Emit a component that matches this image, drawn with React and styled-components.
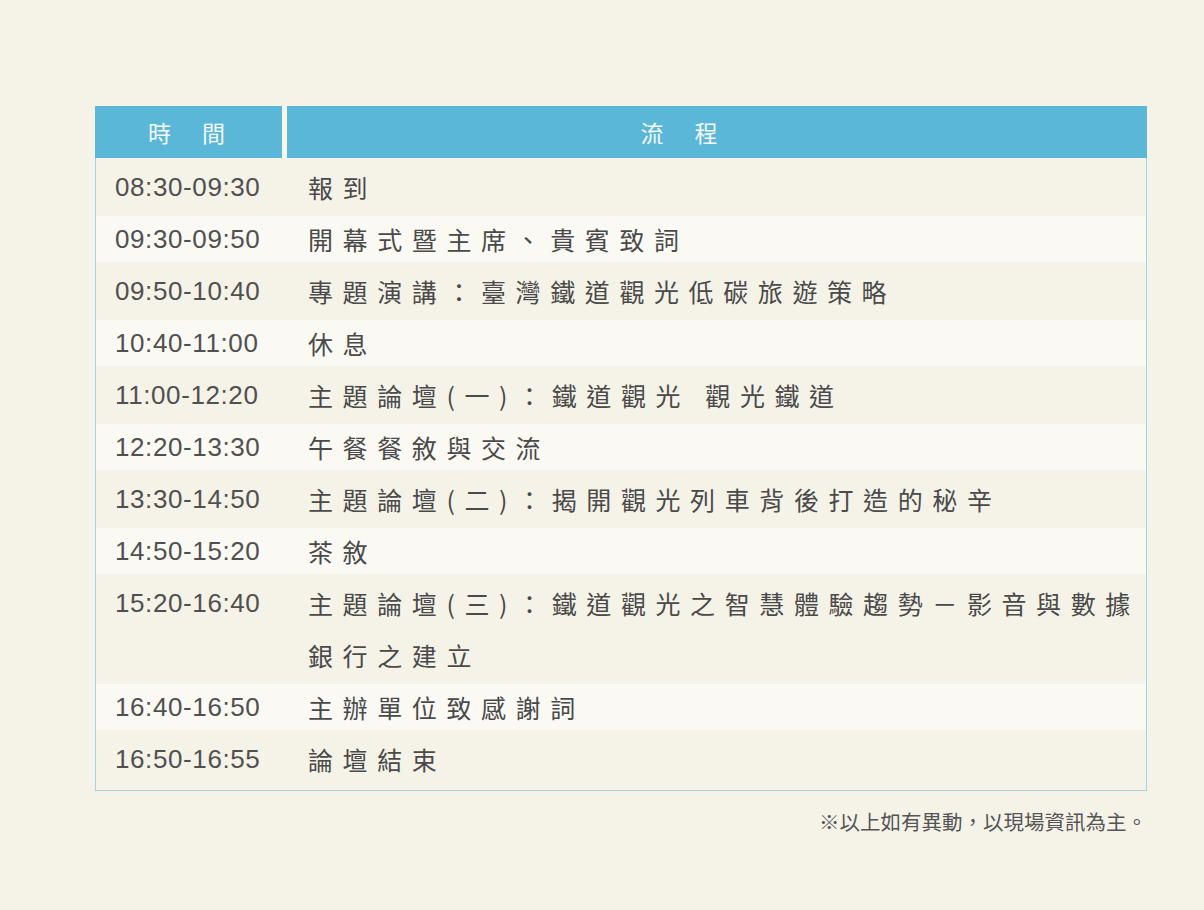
import React from "react";
import styled, { createGlobalStyle } from "styled-components";

const schedule = [
  { time: "08:30-09:30", item: "報到" },
  { time: "09:30-09:50", item: "開幕式暨主席、貴賓致詞" },
  { time: "09:50-10:40", item: "專題演講：臺灣鐵道觀光低碳旅遊策略" },
  { time: "10:40-11:00", item: "休息" },
  { time: "11:00-12:20", item: "主題論壇(一)：鐵道觀光 觀光鐵道" },
  { time: "12:20-13:30", item: "午餐餐敘與交流" },
  { time: "13:30-14:50", item: "主題論壇(二)：揭開觀光列車背後打造的秘辛" },
  { time: "14:50-15:20", item: "茶敘" },
  { time: "15:20-16:40", item: "主題論壇(三)：鐵道觀光之智慧體驗趨勢－影音與數據銀行之建立" },
  { time: "16:40-16:50", item: "主辦單位致感謝詞" },
  { time: "16:50-16:55", item: "論壇結束" },
];

const App = () => {
  return (
    <>
      <GlobalStyle />
      <Page>
        <Table>
          <HeadRow>
            <HeadCell>時　間</HeadCell>
            <HeadCell $wide>流　程</HeadCell>
          </HeadRow>
          <Body>
            {schedule.map((row, i) => (
              <Row key={row.time} $light={i % 2 === 1}>
                <Time>{row.time}</Time>
                <Item>{row.item}</Item>
              </Row>
            ))}
          </Body>
        </Table>
        <Note>※以上如有異動，以現場資訊為主。</Note>
      </Page>
    </>
  );
};

export default App;

const GlobalStyle = createGlobalStyle`
  body {
    margin: 0;
    background: #f5f2e8;
    font-family: "Noto Sans CJK TC", "Noto Sans", sans-serif;
    color: #4a4a4a;
  }
`;

const Page = styled.div`
  width: 1052px;
  margin: 0 0 0 95px;
  padding-top: 106px;
`;

const Table = styled.div`
  border: 1px solid #a8d2de;
  border-top: none;
  background: #f5f2e8;
`;

const HeadRow = styled.div`
  display: grid;
  grid-template-columns: 192px 1fr;
  height: 52px;
  margin: 0 -1px;
`;

const HeadCell = styled.div`
  display: flex;
  align-items: center;
  justify-content: center;
  background: #5bb7d8;
  color: #f4fafc;
  font-size: 23px;
  letter-spacing: 4px;
  border-right: ${(p) => (p.$wide ? "none" : "5px solid #f7f5ee")};
  padding-right: ${(p) => (p.$wide ? "72px" : "0")};
`;

const Body = styled.div`
  padding: 3px 0 5px;
`;

const Row = styled.div`
  display: grid;
  grid-template-columns: 192px 1fr;
  line-height: 52px;
  background: ${(p) => (p.$light ? "#faf9f4" : "#f5f2e8")};
  box-shadow: ${(p) =>
    p.$light ? "inset 0 3px 0 #f5f2e8, inset 0 -3px 0 #f5f2e8" : "none"};
`;

const Time = styled.div`
  padding-left: 19px;
  font-family: "Liberation Sans", Arial, sans-serif;
  font-size: 26px;
  letter-spacing: 0.6px;
  color: #505050;
`;

const Item = styled.div`
  padding: 0 0 0 20px;
  margin-right: -12px;
  font-size: 25px;
  letter-spacing: 9.6px;
  color: #4a4a4a;
`;

const Note = styled.div`
  margin-top: 15px;
  text-align: right;
  font-size: 20.5px;
  color: #555;
`;
